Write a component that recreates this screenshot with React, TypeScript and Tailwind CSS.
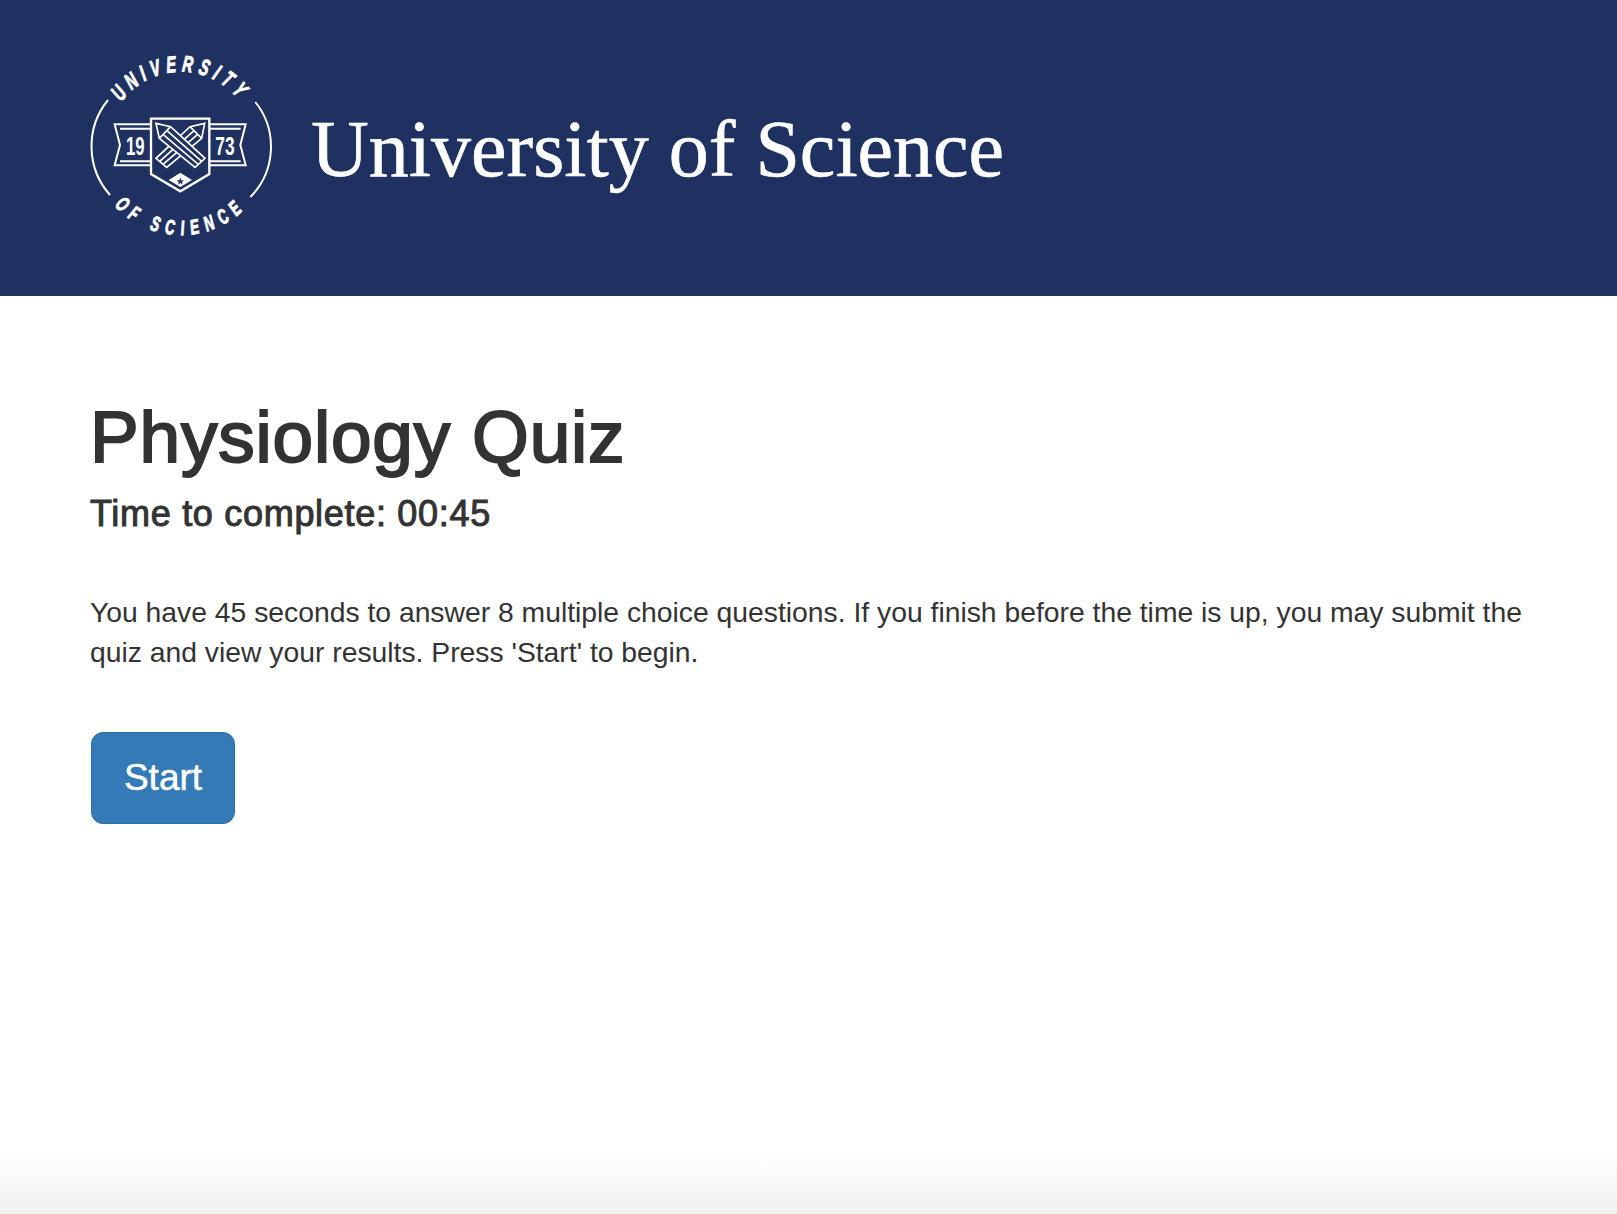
import React from 'react';

const Logo: React.FC = () => (
    <svg viewBox="0 0 660 660" className="w-[220px] h-[220px] shrink-0 text-white" fill="none" stroke="currentColor">
        <defs>
            <path id="arc-top" d="M 113 345 A 220 220 0 0 1 553 345" />
            <path id="arc-bottom" d="M 63 345 A 270 270 0 0 0 603 345" />
        </defs>
        <text fill="currentColor" stroke="currentColor" strokeWidth="3" fontFamily="'Liberation Sans', sans-serif" fontWeight="700" fontStyle="italic" fontSize="68" letterSpacing="25">
            <textPath href="#arc-top" startOffset="50%" textAnchor="middle" textLength="418" lengthAdjust="spacingAndGlyphs">UNIVERSITY</textPath>
        </text>
        <text fill="currentColor" stroke="currentColor" strokeWidth="3" fontFamily="'Liberation Sans', sans-serif" fontWeight="700" fontStyle="italic" fontSize="62" letterSpacing="32">
            <textPath href="#arc-bottom" startOffset="50%" textAnchor="middle" textLength="450" lengthAdjust="spacingAndGlyphs">OF SCIENCE</textPath>
        </text>
        <path d="M 114 210 A 220 220 0 0 0 120 495" strokeWidth="6" />
        <path d="M 556 216 A 215 215 0 0 1 541 501" strokeWidth="6" />
        {/* ribbons */}
        <path d="M 242 283 H 134 L 150 345 L 134 406 H 242" strokeWidth="6" />
        <path d="M 150 296 H 242 M 150 394 H 242" strokeWidth="6" />
        <path d="M 420 283 H 527 L 511 345 L 527 406 H 420" strokeWidth="6" />
        <path d="M 420 296 H 512 M 420 394 H 512" strokeWidth="6" />
        <text x="196" y="375" textAnchor="middle" fill="currentColor" stroke="none" fontFamily="'Liberation Sans', sans-serif" fontWeight="700" fontSize="76" textLength="56" lengthAdjust="spacingAndGlyphs">19</text>
        <text x="465" y="375" textAnchor="middle" fill="currentColor" stroke="none" fontFamily="'Liberation Sans', sans-serif" fontWeight="700" fontSize="76" textLength="58" lengthAdjust="spacingAndGlyphs">73</text>
        {/* shield */}
        <path d="M 243 266 H 418 V 432 L 331 484 L 243 432 Z" strokeWidth="7" />
        <path d="M 331 428 L 296 450 L 331 471 L 366 450 Z" fill="currentColor" stroke="none" />
        <path d="M 331 443 L 334 451 L 342 451 L 336 456 L 338 464 L 331 459 L 324 464 L 326 456 L 320 451 L 328 451 Z" fill="#1f3161" stroke="none" />
        {/* pencils */}
        <g strokeWidth="5" strokeLinejoin="miter">
            <path d="M 404 280 L 360 290 L 258 385 L 290 412 L 395 325 Z" fill="#1f3161" />
            <path d="M 360 290 L 395 325 M 372 302 L 269 394 M 383 313 L 279 403" />
            <path d="M 258 280 L 302 290 L 405 385 L 375 412 L 268 325 Z" fill="#1f3161" />
            <path d="M 302 290 L 268 325 M 291 302 L 395 394 M 279 313 L 385 403" />
        </g>
    </svg>
);

const App: React.FC = () => {
    return (
        <div className="min-h-[1214px] bg-white flex flex-col font-['Liberation_Sans',sans-serif] text-[#333]">
            <header className="h-[296px] bg-[#1f3161] flex items-start pl-[70px] pt-[30px]">
                <Logo />
                <h2 className="ml-[21px] mt-[79px] text-white text-[80px] font-['Liberation_Serif',serif] leading-none [-webkit-text-stroke:0.6px_white]">University of Science</h2>
            </header>
            <main className="flex-1 px-[90px] pt-[97px]">
                <h1 className="text-[73px] leading-[88px] font-normal tracking-[0.8px] [-webkit-text-stroke:2px_#333]">Physiology Quiz</h1>
                <h3 className="text-[36px] leading-[44px] mt-[11px] font-normal tracking-[0.7px] [-webkit-text-stroke:1px_#333]">Time to complete: 00:45</h3>
                <p className="text-[28.3px] leading-[40px] mt-[56px] w-[1460px]">
                    You have 45 seconds to answer 8 multiple choice questions. If you finish before the time is up, you may submit the quiz and view your results. Press 'Start' to begin.
                </p>
                <button className="mt-[60px] ml-[1px] w-[144px] h-[92px] rounded-xl bg-[#337ab7] border border-[#2e6da4] text-white text-[37px] [-webkit-text-stroke:0.5px_white]">Start</button>
            </main>
            <div className="h-[60px] bg-gradient-to-b from-white to-[#f0f0f0]" />
        </div>
    );
};

export default App;
